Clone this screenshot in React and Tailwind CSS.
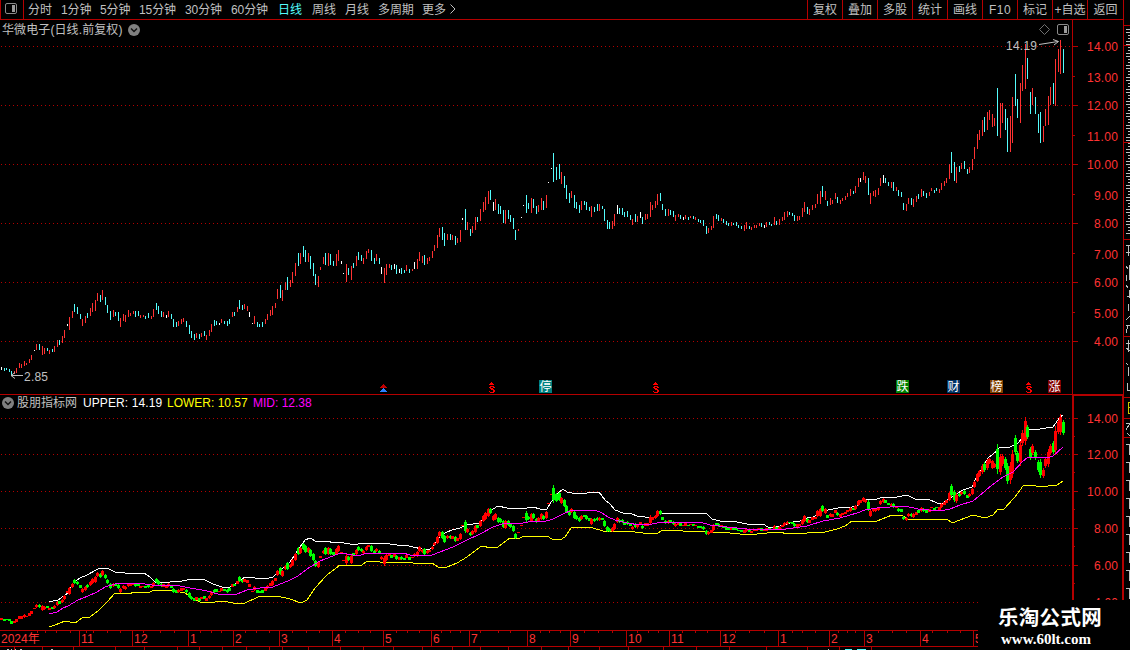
import React from 'react';
import clsx from 'clsx';

const PERIODS = [
  { label: '分时', width: 'w-[33px]' },
  { label: '1分钟', width: 'w-[39px]' },
  { label: '5分钟', width: 'w-[39px]' },
  { label: '15分钟', width: 'w-[46px]' },
  { label: '30分钟', width: 'w-[46px]' },
  { label: '60分钟', width: 'w-[47px]' },
  { label: '日线', width: 'w-[34px]', active: true },
  { label: '周线', width: 'w-[33px]' },
  { label: '月线', width: 'w-[33px]' },
  { label: '多周期', width: 'w-[44px]' },
  { label: '更多', width: 'w-[27px]' },
];

const TOOLS = ['复权', '叠加', '多股', '统计', '画线', 'F10', '标记', '+自选', '返回'];

// x high low kind  (r = up, c = down, w = flat)
const RAW = `
1 367 370 w,4 368 371 c,6 368 370 c,9 369 372 c,11 371 376 c,14 371 374 r,16 368 373 r,19 363 368 r,21 364 368 r,24 361 366 r,
26 363 365 r,29 359 363 r,31 355 360 r,34 350 351 w,36 344 350 r,39 344 350 c,42 346 355 r,44 348 354 r,47 348 351 c,49 350 354 r,
52 349 352 c,54 346 352 r,57 340 347 r,59 340 345 c,62 336 343 r,64 330 338 r,67 324 326 w,69 317 330 r,72 311 318 r,74 304 312 c,
77 307 314 c,80 314 319 c,82 319 326 r,85 316 323 r,87 313 318 c,90 308 316 r,92 303 312 r,95 300 311 r,97 293 301 r,100 295 302 c,
102 290 300 r,105 297 305 c,107 305 313 c,110 311 320 c,113 310 317 r,115 312 316 c,118 312 321 c,120 318 327 r,123 314 321 r,125 315 322 r,
128 310 317 r,130 313 316 r,133 311 314 r,135 311 317 c,138 311 316 c,140 315 318 r,143 315 317 r,145 316 319 c,148 313 318 c,151 316 319 r,
153 309 317 r,156 303 310 c,158 306 314 c,161 311 317 c,163 312 317 r,166 315 318 w,168 311 317 r,171 314 319 c,173 319 327 c,176 322 327 c,
178 321 326 r,181 319 324 r,183 318 322 r,186 321 327 c,189 325 334 c,191 331 338 c,194 334 340 c,196 333 338 r,199 334 339 c,201 333 337 r,
204 331 336 c,206 335 340 r,209 330 336 r,211 324 332 r,214 320 326 c,216 321 325 c,219 323 325 w,221 319 323 r,224 321 324 c,227 321 326 c,
229 319 324 c,232 312 317 r,234 312 316 c,237 307 312 r,239 300 309 c,242 305 310 c,244 304 309 r,247 306 311 r,249 312 317 w,252 323 324 w,
254 316 324 r,257 322 327 c,259 324 327 c,262 322 327 c,265 319 324 r,267 314 320 r,270 310 316 r,272 306 315 r,275 303 308 r,277 289 299 r,
280 285 298 c,282 290 301 r,285 282 290 r,287 277 290 c,290 280 287 r,292 272 283 r,295 263 276 r,298 253 266 c,300 253 264 r,303 246 257 c,
305 250 262 c,308 253 262 r,310 256 269 c,313 263 276 c,315 274 285 c,318 276 287 r,320 267 270 r,323 257 264 r,325 253 265 c,328 253 266 r,
330 254 265 c,333 261 266 c,336 254 266 r,338 250 261 r,341 261 264 w,343 273 274 w,346 264 282 r,348 268 275 c,351 266 280 r,353 263 268 c,
356 256 266 r,358 252 260 c,361 255 261 c,363 258 264 r,366 251 259 r,368 249 253 r,371 250 261 c,374 258 264 c,376 254 261 r,379 258 264 c,
381 267 274 w,384 268 283 r,386 264 275 r,389 264 268 r,391 265 270 c,394 264 269 w,396 265 274 c,399 269 273 w,401 268 274 c,404 270 273 c,
406 265 271 r,409 269 273 c,412 269 271 r,414 262 269 w,417 259 269 r,419 252 261 r,422 256 263 r,424 255 265 c,427 258 264 r,429 257 261 r,
432 251 258 r,434 245 251 r,437 235 248 r,439 228 237 r,442 227 240 c,444 233 246 c,447 234 240 r,450 234 240 c,452 235 240 r,455 236 245 c,
457 238 243 r,460 230 242 r,462 218 220 w,465 209 230 c,467 222 230 r,470 229 236 c,472 226 233 r,475 217 230 r,477 217 222 c,480 209 221 r,
483 202 212 r,485 197 210 r,488 191 204 r,490 190 200 c,493 202 211 w,495 199 210 r,498 204 214 c,500 206 214 c,503 210 223 c,505 210 224 r,
508 210 219 c,510 215 222 c,513 218 229 c,515 230 240 c,518 229 231 r,521 217 218 w,523 205 206 w,526 195 213 c,528 203 209 c,531 198 213 r,
533 199 208 c,536 206 214 c,538 205 212 r,541 198 210 r,543 201 210 c,546 195 208 r,548 182 183 w,551 168 169 w,553 153 182 c,556 167 180 c,
559 164 179 c,561 172 184 r,564 176 188 c,566 185 199 c,569 193 203 c,571 191 198 r,574 195 208 c,576 202 209 c,579 205 213 c,581 201 210 r,
584 201 205 c,586 202 210 c,589 207 211 c,591 206 217 r,594 207 212 c,597 204 211 c,599 204 211 r,602 206 209 c,604 209 221 c,607 220 229 c,
609 222 229 c,612 221 229 r,614 214 226 r,617 205 214 w,619 208 214 c,622 208 215 c,624 212 217 c,627 211 217 c,630 215 220 c,632 219 225 r,
635 214 222 c,637 216 222 r,640 212 218 w,642 217 224 c,645 214 220 r,647 214 219 r,650 202 217 r,652 205 210 r,655 201 208 r,657 194 205 r,
660 193 201 c,662 204 210 c,665 209 216 c,668 209 216 r,670 210 215 c,673 211 217 c,675 215 221 r,678 214 217 r,680 215 219 c,683 217 220 w,
685 215 219 r,688 217 220 c,690 216 218 r,693 216 219 c,695 217 220 r,698 219 222 c,700 220 223 c,703 220 226 c,706 226 234 c,708 228 233 r,
711 226 230 r,713 216 228 r,716 214 219 c,718 215 221 c,721 218 221 r,723 219 223 c,726 221 225 c,728 223 226 c,731 222 226 r,733 223 225 c,
736 222 226 c,738 225 228 c,741 226 229 c,744 225 231 r,746 222 229 r,749 226 229 c,751 227 230 r,754 225 228 r,756 225 228 r,759 223 226 r,
761 223 227 c,764 225 228 w,766 222 227 r,769 222 225 c,771 224 226 c,774 217 225 r,776 221 225 c,779 219 225 r,782 217 221 r,784 212 220 r,
787 211 217 r,789 212 215 c,792 213 216 c,794 215 221 c,797 216 221 r,799 216 220 r,802 208 217 r,804 202 212 r,807 207 214 c,809 209 215 r,
812 205 210 r,815 204 208 r,817 194 204 r,820 191 204 r,822 186 197 c,825 191 200 r,827 201 206 c,830 198 205 r,832 200 204 r,835 193 199 r,
837 197 203 c,840 200 204 r,842 198 201 r,845 196 200 r,847 193 197 r,850 189 196 r,853 191 194 c,855 186 193 r,858 178 187 r,860 178 182 w,
863 172 180 r,865 176 183 r,868 178 195 c,870 193 204 r,873 191 196 r,875 190 197 r,878 188 195 r,880 178 186 r,883 175 183 w,885 178 183 c,
888 182 186 c,891 182 188 r,893 182 191 c,896 187 191 r,898 190 196 c,901 192 197 c,903 203 210 c,906 204 211 r,908 198 204 r,911 198 205 c,
913 199 207 r,916 196 202 r,918 194 199 c,921 189 197 r,923 191 196 c,926 193 198 c,929 192 196 r,931 188 191 r,934 190 193 c,936 188 191 c,
939 189 193 r,941 183 190 r,944 181 186 r,946 178 183 r,949 164 179 r,951 152 173 c,954 162 181 c,956 167 183 r,959 166 172 c,961 163 169 r,
964 161 169 c,967 169 174 c,969 167 173 r,972 159 170 r,974 147 159 r,977 134 149 r,979 130 140 r,982 120 136 r,984 117 132 c,987 112 130 r,
989 110 120 r,992 114 127 r,994 118 126 r,997 88 136 c,1000 103 138 r,1002 103 123 r,1005 109 130 c,1007 118 152 c,1010 116 152 r,1012 97 143 r,
1015 74 106 c,1017 99 118 c,1020 83 123 r,1022 65 91 r,1025 44 89 r,1027 58 79 c,1030 92 114 c,1032 88 105 r,1035 97 114 c,1038 114 133 c,
1040 112 143 c,1043 126 142 r,1045 109 126 r,1048 96 125 r,1050 87 105 r,1053 83 104 c,1055 59 106 r,1058 49 72 r,1060 40 74 r,1063 49 73 c`;

const CANDLES = RAW.trim().split(',').map((row) => {
  const [x, high, low, kind] = row.trim().split(' ');
  return { x: +x, high: +high, low: +low, kind };
});

const BAR_COLORS = { r: '#ff3232', c: '#54fcfc', w: '#ffffff' };

const UPPER =
  '49,602 58,600 68,593 73,583 80,578 87,575 98,569 107,568 115,572 125,573 144,573 150,577 155,582 170,582 182,581 192,579 203,579 213,584 222,587 230,587 238,582 245,577 255,578 265,579 273,577 278,572 283,568 290,562 300,547 305,540 310,538 317,542 328,541 333,543 338,542 350,544 355,545 358,544 380,543 390,544 397,545 405,545 413,547 422,549 430,549 434,545 440,536 447,532 452,530 460,528 467,525 480,523 487,515 493,509 498,506 507,508 527,508 533,507 540,509 547,509 551,502 558,493 563,489 567,492 572,493 587,493 592,492 599,492 605,500 610,504 615,510 623,513 632,514 637,516 645,517 655,517 660,513 700,513 707,514 712,519 720,521 737,522 747,524 763,524 768,527 773,528 780,526 793,522 800,521 807,518 813,517 823,511 833,509 843,507 847,508 857,506 864,499 877,499 883,497 897,497 907,495 915,499 928,499 937,503 943,503 950,498 958,493 963,490 972,487 975,480 980,472 988,458 993,454 997,451 1000,447 1010,447 1018,443 1023,437 1030,429 1040,429 1053,427 1060,417 1063,415';
const MID =
  '49,614 57,612 63,608 68,606 78,600 88,596 97,592 105,587 115,584 132,583 145,584 152,585 180,586 190,588 202,590 207,591 218,594 230,595 237,594 247,590 260,588 273,587 280,584 288,581 298,576 307,569 320,561 333,556 340,553 347,554 358,556 367,553 403,553 410,555 432,555 440,552 453,547 467,540 480,534 493,527 502,524 510,523 523,523 533,521 543,522 553,519 563,514 572,510 595,510 602,513 608,517 615,520 627,523 640,525 652,524 663,522 700,522 710,525 727,527 747,529 780,530 793,528 807,526 823,521 840,518 857,513 865,510 877,508 890,507 905,506 918,509 940,511 950,509 960,505 973,501 985,491 992,485 1003,477 1013,472 1022,462 1028,457 1038,457 1047,458 1053,456 1063,447';
const LOWER =
  '49,627 55,625 65,621 75,623 82,618 90,617 98,611 107,602 115,593 128,594 135,592 147,593 155,590 170,590 185,593 193,598 200,602 207,603 223,601 233,603 245,603 258,597 277,596 290,599 301,603 307,600 315,588 327,575 340,565 350,566 362,565 367,561 380,562 384,563 403,562 413,563 432,563 438,567 447,567 457,563 467,557 480,547 484,546 489,548 498,547 510,538 517,539 525,536 547,536 552,539 560,540 565,537 571,528 580,527 593,528 603,531 610,532 627,531 643,533 658,533 663,530 683,531 703,531 707,533 720,532 740,534 757,534 767,533 777,532 790,534 807,533 825,532 837,529 845,526 852,521 877,521 892,515 902,515 907,519 947,519 952,523 960,520 973,515 985,518 993,515 998,509 1003,510 1015,497 1023,486 1032,485 1040,487 1057,485 1063,481';

const PRICE_LABELS = [
  ['14.00', 46], ['13.00', 77], ['12.00', 105], ['11.00', 136], ['10.00', 164], ['9.00', 195],
  ['8.00', 223], ['7.00', 254], ['6.00', 282], ['5.00', 313], ['4.00', 341],
];
const BAND_LABELS = [['14.00', 418], ['12.00', 454], ['10.00', 491], ['8.00', 528], ['6.00', 565], ['4.00', 602]];

const MONTHS = [
  { label: '2024年', width: 79 },
  { label: '11', width: 53 },
  { label: '12', width: 56 },
  { label: '1', width: 45 },
  { label: '2', width: 46 },
  { label: '3', width: 53 },
  { label: '4', width: 51 },
  { label: '5', width: 48 },
  { label: '6', width: 38 },
  { label: '7', width: 58 },
  { label: '8', width: 43 },
  { label: '9', width: 56 },
  { label: '10', width: 43 },
  { label: '11', width: 51 },
  { label: '12', width: 58 },
  { label: '1', width: 51 },
  { label: '2', width: 35 },
  { label: '3', width: 56 },
  { label: '4', width: 53 },
  { label: '5', width: 5 },
];

const EVENTS = [
  { x: 539, label: '停', fill: '#008080' },
  { x: 896, label: '跌', fill: '#008000' },
  { x: 947, label: '财', fill: '#003366' },
  { x: 990, label: '榜', fill: '#804000' },
  { x: 1048, label: '涨', fill: '#800000' },
];

const WEEK_TICKS = [37, 45, 56, 70, 86, 93, 107, 120, 143, 160, 174, 200, 211, 221, 245, 256, 269, 292, 306, 319, 345, 358, 370, 396, 407, 419, 441, 450, 460, 480, 498, 510, 540, 549, 560, 584, 598, 612, 637, 648, 658, 682, 695, 707, 735, 749, 764, 792, 802, 815, 838, 847, 855, 878, 892, 906, 932, 947, 960];
const FOOT_TICKS = [14, 42, 73, 115, 144, 177, 199, 222, 246, 269, 282, 308, 340, 363, 393, 422, 452, 480, 508, 541, 568, 599, 628, 663, 696, 729, 766, 807, 839, 871];

const Expand = () => (
  <svg width="12" height="12" viewBox="0 0 12 12">
    <circle cx="6" cy="6" r="6" fill="#808080" />
    <path d="M3 4.5 6 7.5 9 4.5" fill="none" stroke="#111" strokeWidth="1.5" />
  </svg>
);

const PanelIcon = () => (
  <svg width="12" height="11" viewBox="0 0 12 11">
    <rect x=".5" y=".5" width="11" height="10" rx="1.5" fill="none" stroke="#8a8a8a" />
    <rect x="7" y="2" width="3" height="7" fill="#9a9a9a" />
  </svg>
);

const Grid = ({ rows }) =>
  rows.map((y) => (
    <line key={y} x1="1" x2="1072" y1={y + 0.5} y2={y + 0.5} stroke="#b40000" strokeDasharray="1 3" />
  ));

const AxisLabel = ({ text, y }) => (
  <text x="1118" y={y + 5} textAnchor="end" fill="#ff3232" fontSize="12" textLength={text.length === 5 ? 31 : 24}>
    {text}
  </text>
);

const Dividend = ({ x }) => (
  <g fill="#ff0000">
    <rect x={x + 2} y="382" width="1" height="1" />
    <rect x={x + 1} y="383" width="3" height="1" />
    <rect x={x} y="384" width="5" height="1" />
    <rect x={x + 1} y="386" width="4" height="1" />
    <rect x={x} y="387" width="2" height="1" />
    <rect x={x + 4} y="387" width="2" height="1" />
    <rect x={x + 1} y="388" width="3" height="1" />
    <rect x={x + 2} y="389" width="3" height="1" />
    <rect x={x + 4} y="390" width="2" height="1" />
    <rect x={x} y="391" width="1" height="1" />
    <rect x={x + 4} y="391" width="2" height="1" />
    <rect x={x + 1} y="392" width="4" height="1" />
  </g>
);

const PriceChart = () => (
  <svg
    className="block font-['Liberation_Sans','Noto_Sans_CJK_SC',sans-serif]"
    width="1123"
    height="374"
    viewBox="0 20 1123 374"
  >
    <g shapeRendering="crispEdges">
      <Grid rows={[46, 105, 164, 223, 282, 341]} />
      <rect x="1072" y="20" width="1" height="374" fill="#b40000" />
      {PRICE_LABELS.map(([label], i) => (
        <rect key={label} x="1073" y={46 + Math.round(i * 29.5)} width={i % 2 ? 2 : 5} height="1" fill="#b40000" />
      ))}
      {CANDLES.map(({ x, high, low, kind }) => (
        <rect key={x} x={x} y={high} width="1" height={low - high} fill={BAR_COLORS[kind]} />
      ))}
      <Dividend x={489} />
      <Dividend x={653} />
      <Dividend x={1026} />
      <path d="M380 387.500h7l-3.500-3.500z" fill="#c00000" />
      <path d="M380 392h7l-3.500-4z" fill="#2a80ff" />
    </g>
    {PRICE_LABELS.map(([label, y]) => (
      <AxisLabel key={label} text={label} y={y} />
    ))}
    {EVENTS.map(({ x, label, fill }) => (
      <g key={x}>
        <rect x={x} y="380" width="13" height="13" fill={fill} />
        <text x={x + 0.5} y="391" fontSize="12" fill="#fff">{label}</text>
      </g>
    ))}
    <g fill="none" stroke="#c0c0c0">
      <path d="M11 375.500H23M11 375.500l4-3M11 375.500l4 3" />
      <path d="M1039 44.500 1058 41.500M1053 39.500l5.500 2-4.500 3.500" />
      <path d="M1044.500 24.500 1049.500 29.500 1044.500 34.500 1039.500 29.500z" stroke="#707070" />
    </g>
    <text x="24" y="381" fontSize="12" fill="#c0c0c0" textLength="24">2.85</text>
    <text x="1006" y="50" fontSize="12" fill="#c0c0c0" textLength="31">14.19</text>
    <rect x="1057.500" y="24.500" width="11" height="10" rx="1.500" fill="#000" stroke="#8a8a8a" />
    <rect x="1064" y="26" width="3" height="7" fill="#9a9a9a" />
  </svg>
);

// same candles, squeezed to the band panel's scale
const toBand = (y) => 418 + (y - 46) * 0.6235;

const BandCandle = ({ x, high, low, kind }) => {
  const top = Math.round(toBand(high));
  const height = Math.max(1, Math.round(toBand(low)) - top);
  const pad = height > 3 ? Math.round(height * 0.16) : 0;
  const fill = kind === 'c' ? '#00ff00' : '#ff0000';
  if (height <= 1) return <rect x={x - 1} y={top} width="3" height="1" fill={fill} />;
  return (
    <g fill={fill}>
      <rect x={x} y={top} width="1" height={height} />
      <rect x={x - 1} y={top + pad} width="3" height={height - pad * 2 || 1} />
    </g>
  );
};

const BandChart = () => (
  <svg
    className="block font-['Liberation_Sans',sans-serif]"
    width="1123"
    height="236"
    viewBox="0 394 1123 236"
    shapeRendering="crispEdges"
  >
    <Grid rows={[418, 454, 491, 528, 565, 602]} />
    <g fill="none" strokeWidth="1">
      <polyline points={UPPER} stroke="#ffffff" />
      <polyline points={LOWER} stroke="#ffff00" />
    </g>
    {CANDLES.map((c) => (
      <BandCandle key={c.x} {...c} />
    ))}
    <polyline points={MID} stroke="#ff00ff" fill="none" />
    <rect x="0" y="394" width="1123" height="1" fill="#b40000" />
    <rect x="1072" y="394" width="51" height="2" fill="#b40000" />
    <rect x="1072" y="394" width="2" height="236" fill="#b40000" />
    <rect x="1122" y="394" width="1" height="236" fill="#b40000" />
    {BAND_LABELS.map(([label, y]) => (
      <g key={label}>
        <rect x="1074" y={y} width="4" height="1" fill="#b40000" />
        <rect x="1074" y={y + 18} width="1" height="1" fill="#b40000" />
        <AxisLabel text={label} y={y} />
      </g>
    ))}
  </svg>
);

const TimeAxis = () => (
  <div className="relative flex h-[17px] w-[978px] overflow-hidden border-y border-[#b40000]">
    {MONTHS.map(({ label, width }, i) => (
      <div
        key={i}
        style={{ width }}
        className={clsx(
          'h-full shrink-0 overflow-hidden whitespace-nowrap text-[12px] leading-[16px] text-[#ff3232]',
          i === 0 ? 'pl-px' : 'border-l border-[#b40000] pl-px tracking-[0.3px]'
        )}
      >
        {label}
      </div>
    ))}
    <svg className="absolute top-0 left-0" width="978" height="2" fill="#b40000" shapeRendering="crispEdges">
      {WEEK_TICKS.map((x) => (
        <rect key={x} x={x} y="0" width="1" height="2" />
      ))}
    </svg>
  </div>
);

const FootStrip = () => (
  <svg className="block" width="978" height="3" shapeRendering="crispEdges">
    {FOOT_TICKS.map((x) => (
      <rect key={x} x={x} y="0" width="1" height="3" fill="#b40000" />
    ))}
    <path d="M7 2.500h2m2 0h1m3 0h1m4 0h2m29 0h2M828 2.500h1m16 0h1" stroke="#c0c0c0" />
    <path d="M845 2.500h7m5 0h9" stroke="#54fcfc" />
  </svg>
);

const SideStrip = () => {
  const dashes = [];
  for (let y = 29; y < 236; y += 3) {
    const wide = y % 4 < 2;
    dashes.push(`M${wide ? 3 : 5} ${y + 0.5}H7`);
  }
  const ones = Array.from({ length: 9 }, (_, i) => `M3 ${444.5 + i * 18}h3v10`);
  return (
    <div className="h-[600px] w-[7px] border-l border-[#b40000]">
      <svg className="block" width="6" height="600" viewBox="1 0 6 600" fill="none" shapeRendering="crispEdges">
        <path d={dashes.join('')} stroke="#c0c0c0" />
        <path
          d="M3 245h4M5 245v11M3 252h4M3 266l2 3M4 275l-1 6M6 265v15M3 285l2 3M6 290v8M4 296h3M5 304v7M3 320l4-4M3 325h4M5 325l-2 8M3 343h4M5 340v12M3 348l4 3M3 363l2 2M5 367v9M4 383v7h3M3 423h4l-4 7M4 433l3 3"
          stroke="#c0c0c0"
        />
        <path d="M7 402H5V413H7M5 407H7" stroke="#c8c800" />
        <path d={ones.join('')} stroke="#c0c0c0" />
        <path d="M1 25.500h6M1 45.500h6M1 142.500h6M1 239.500h6M1 336.500h6M1 397.500h6M1 418.500h6M1 437.500h6" stroke="#b40000" />
      </svg>
    </div>
  );
};

export default function App() {
  return (
    <div className="relative flex h-[650px] w-[1130px] overflow-hidden bg-black font-['Liberation_Sans','Noto_Sans_CJK_SC',sans-serif] text-[12px] text-[#c0c0c0]">
      <div className="flex w-[1123px] shrink-0 flex-col">
        <header className="flex h-5 shrink-0 items-stretch border-b border-l border-[#b40000] leading-[21px] whitespace-nowrap">
          <div className="flex w-[23px] items-center border-r border-[#b40000] pb-0.5 pl-1">
            <PanelIcon />
          </div>
          <nav className="flex pl-1">
            {PERIODS.map(({ label, width, active }) => (
              <span key={label} className={clsx('shrink-0 tracking-[-0.1px]', width, active && 'text-[#54fcfc]')}>
                {label}
              </span>
            ))}
            <svg className="mt-1" width="7" height="10" viewBox="0 0 7 10" fill="none" stroke="#c0c0c0">
              <path d="M1.500 .5 6 5 1.500 9.500" />
            </svg>
          </nav>
          <div className="ml-auto flex">
            {TOOLS.map((tool, i) => (
              <span
                key={tool}
                className={clsx(
                  'border-l border-[#b40000] text-center',
                  i === TOOLS.length - 1 ? 'w-[36px]' : 'w-[35px]',
                  tool === 'F10' && 'tracking-[0.5px]'
                )}
              >
                {tool}
              </span>
            ))}
          </div>
        </header>

        <section className="relative h-[374px] shrink-0">
          <PriceChart />
          <div className="absolute top-0 left-[2px] flex h-[19px] items-center gap-[5px] whitespace-nowrap">
            <span className="tracking-[0.1px]">华微电子(日线.前复权)</span>
            <Expand />
          </div>
        </section>

        <section className="relative h-[236px] shrink-0">
          <BandChart />
          <div className="absolute top-0 left-[2px] flex h-[17px] items-center whitespace-nowrap">
            <Expand />
            <span className="ml-[3px] w-[66px]">股朋指标网</span>
            <span className="w-[84px] tracking-[0.1px] text-white">UPPER: 14.19</span>
            <span className="w-[86px] text-[#ffff00]">LOWER: 10.57</span>
            <span className="text-[#ff00ff]">MID: 12.38</span>
          </div>
        </section>

        <TimeAxis />
        <FootStrip />
      </div>

      <SideStrip />

      <div className="absolute right-0 bottom-0 flex h-[50px] w-[152px] flex-col bg-black pl-5 text-white">
        <div className="mt-[7px] h-[22px] font-['Liberation_Sans','Noto_Sans_CJK_SC',sans-serif] text-[20.5px] leading-[22px] font-bold tracking-[0.3px]">
          乐淘公式网
        </div>
        <div className="mt-0.5 pl-[3px] font-['Liberation_Serif',serif] text-[15px] leading-4 font-bold">www.60lt.com</div>
      </div>
    </div>
  );
}
